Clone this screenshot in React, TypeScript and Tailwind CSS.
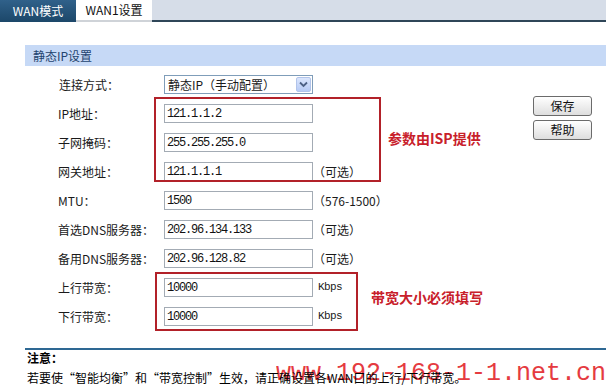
import React from "react";

type Row = { label: string; value: string; suffix?: string; kbps?: boolean };

const rows: Row[] = [
  { label: "IP地址：", value: "121.1.1.2" },
  { label: "子网掩码：", value: "255.255.255.0" },
  { label: "网关地址：", value: "121.1.1.1", suffix: "（可选）" },
  { label: "MTU：", value: "1500", suffix: "（576-1500）" },
  { label: "首选DNS服务器：", value: "202.96.134.133", suffix: "（可选）" },
  { label: "备用DNS服务器：", value: "202.96.128.82", suffix: "（可选）" },
  { label: "上行带宽：", value: "10000", suffix: "Kbps", kbps: true },
  { label: "下行带宽：", value: "10000", suffix: "Kbps", kbps: true },
];

function Btn({ children }: { children: React.ReactNode }) {
  return (
    <div className="w-[59px] h-[20px] rounded-[3px] border border-[#6b6b6b] bg-gradient-to-b from-white to-[#dedede] flex items-center justify-center text-[12px] text-[#111] leading-none">
      {children}
    </div>
  );
}

export default function App() {
  return (
    <div className="relative w-[606px] h-[390px] overflow-hidden bg-white text-[12px] text-[#1a1a1a] font-['Noto_Sans_CJK_SC',sans-serif]">
      {/* tab bar */}
      <div className="flex h-[22px] bg-[#d6dde8]">
        <div className="w-[76px] h-[22px] bg-gradient-to-b from-[#30618a] to-[#1c4769] text-white flex items-center justify-center leading-none">
          WAN模式
        </div>
        <div className="w-[76px] h-[22px] bg-white border-b-2 border-[#cfd3d8] flex items-center justify-center leading-none text-[#111]">
          WAN1设置
        </div>
        <div className="flex-1 border-b-2 border-[#2f4658]" />
      </div>

      {/* section header */}
      <div className="mt-[23px] ml-[25px] h-[21px] bg-[#c6d9f6] flex items-center pl-[8px] text-[#23446f] leading-none">
        静态IP设置
      </div>

      {/* form */}
      <div className="mt-[4px] flex">
        <div className="flex flex-col w-[520px]">
          <div className="h-[29px] flex items-center">
            <div className="w-[164px] pl-[59px] leading-none">连接方式：</div>
            <div className="w-[149px] h-[19px] border border-[#7f9db9] flex items-center justify-between pl-[3px] pr-[1px] bg-white">
              <span className="leading-none">静态IP（手动配置）</span>
              <span className="w-[15px] h-[15px] bg-gradient-to-b from-[#dbe6fd] to-[#b7cbf5] border border-[#b2c4ea] rounded-[2px] flex items-center justify-center">
                <svg width="9" height="7" viewBox="0 0 9 7">
                  <path d="M1 1.5 L4.5 5 L8 1.5" fill="none" stroke="#4d6185" strokeWidth="1.8" />
                </svg>
              </span>
            </div>
          </div>
          {rows.map((r) => (
            <div key={r.label} className="h-[29px] flex items-center">
              <div className="w-[164px] pl-[58px] leading-none">{r.label}</div>
              <div className="w-[149px] h-[19px] border border-[#a3abb4] flex items-center pl-[2px] bg-white font-['Liberation_Mono',monospace] text-[12px] tracking-[-1.2px] text-[#111] leading-none">
                {r.value}
              </div>
              {r.suffix && (
                <div
                  className={
                    r.kbps
                      ? "ml-[5px] font-['Liberation_Mono',monospace] text-[11px] tracking-[-0.6px] leading-none"
                      : "ml-[0px] leading-none"
                  }
                >
                  {r.suffix}
                </div>
              )}
            </div>
          ))}
        </div>
        <div className="ml-[13px] mt-[26px] flex flex-col gap-[4px]">
          <Btn>保存</Btn>
          <Btn>帮助</Btn>
        </div>
      </div>

      {/* bottom note */}
      <div className="mt-[17px] ml-[25px] h-[2px] bg-[#2e6893]" />
      <div className="pl-[27px] mt-[1px] h-[14px] flex items-center font-bold text-black leading-none">注意：</div>

      {/* watermark (under the note text) */}
      <div className="absolute left-[276px] top-[361px] font-['Liberation_Mono',monospace] text-[25px] leading-[25px] text-[#e3262c] opacity-90 whitespace-nowrap">
        www.192-168-1-1.net.cn
      </div>

      <div className="relative pl-[27px] mt-[6px] h-[14px] flex items-center text-black leading-none whitespace-nowrap">
        若要使“智能均衡”和“带宽控制”生效，请正确设置各WAN口的上行/下行带宽。
      </div>

      {/* red annotation boxes */}
      <div className="absolute left-[154px] top-[97px] w-[227px] h-[85px] border-2 border-[#b22129]" />
      <div className="absolute left-[155px] top-[272px] w-[203px] h-[59px] border-2 border-[#b22129]" />
      <div className="absolute left-[388px] top-[131px] text-[14px] font-bold text-[#c8202a] leading-none whitespace-nowrap">
        参数由ISP提供
      </div>
      <div className="absolute left-[371px] top-[290px] text-[14px] font-bold text-[#c8202a] leading-none whitespace-nowrap">
        带宽大小必须填写
      </div>
    </div>
  );
}
